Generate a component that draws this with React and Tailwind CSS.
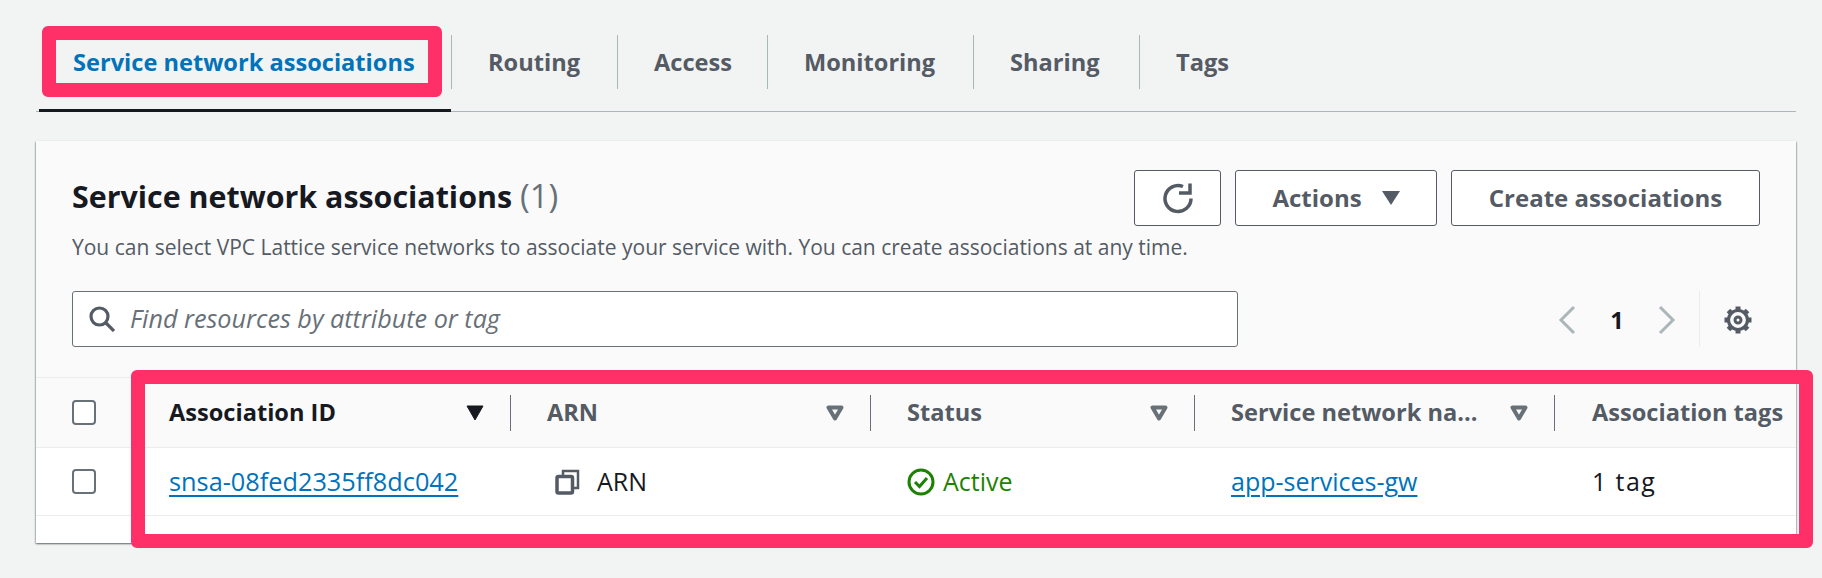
import React from 'react';

const tabs = [
  { label: 'Service network associations', width: 'w-[412px]', active: true },
  { label: 'Routing', width: 'w-[166px]' },
  { label: 'Access', width: 'w-[150px]' },
  { label: 'Monitoring', width: 'w-[206px]' },
  { label: 'Sharing', width: 'w-[166px]' },
  { label: 'Tags', width: 'w-[120px]' },
];

const gearTeeth = [0, 45, 90, 135, 180, 225, 270, 315];

function SortIcon({ active }) {
  if (active) {
    return (
      <svg width="18" height="16" viewBox="0 0 18 16" className="shrink-0">
        <path d="M1 1h16L9 15z" fill="#16191f" stroke="#16191f" strokeLinejoin="round" />
      </svg>
    );
  }
  return (
    <svg width="18" height="16" viewBox="0 0 18 16" className="shrink-0">
      <path d="M2.500 2.500h13L9 13.500z" fill="none" stroke="#687078" strokeWidth="4" strokeLinejoin="round" />
    </svg>
  );
}

function HeaderCell({ label, width, active, last }) {
  return (
    <div className={`${width} h-[36px] flex items-center justify-between ${last ? '' : 'border-r border-[#687078] pr-[26px]'} shrink-0`}>
      <span className={`text-[23.6px] font-bold whitespace-nowrap ${active ? 'text-[#16191f]' : 'text-[#545b64]'}`}>{label}</span>
      {!last && <SortIcon active={active} />}
    </div>
  );
}

function Checkbox() {
  return <div className="w-[24px] h-[25px] rounded-[4px] border-2 border-[#687078] bg-white shrink-0" />;
}

function Button({ className, children }) {
  return (
    <button className={`h-[56px] shrink-0 rounded-[3px] border border-[#545b64] bg-white flex items-center justify-center text-[#545b64] text-[24px] font-bold ${className}`}>
      {children}
    </button>
  );
}

export default function App() {
  return (
    <div className="relative w-[1822px] h-[578px] overflow-hidden bg-[#f2f3f3] pl-[36px] pr-[26px] pt-[35px] font-['Open_Sans',sans-serif]">
      {/* tabs */}
      <div className="h-[77px] border-b border-[#aab7b8] flex pl-[3px]">
        {tabs.map((tab, i) => (
          <div key={tab.label} className={`${tab.width} relative h-[77px] ${tab.active ? 'border-b-[3px] border-[#16191f]' : ''}`}>
            <div className={`h-[54px] pt-[2px] flex items-center ${i === 0 ? 'pl-[34px]' : 'pl-[36px] border-l border-[#aab7b8]'}`}>
              <span className={`text-[23.6px] font-bold whitespace-nowrap ${tab.active ? 'text-[#0073bb]' : 'text-[#545b64]'}`}>{tab.label}</span>
            </div>
          </div>
        ))}
      </div>

      {/* card */}
      <div className="mt-[29px] h-[402px] bg-[#fafafa] shadow-[0_1px_2px_rgba(0,28,36,0.4),1px_1px_1px_rgba(0,28,36,0.15),-1px_1px_1px_rgba(0,28,36,0.15)]">
        <div className="px-[36px] pt-[29px]">
          <div className="flex items-start">
            <div className="flex-1 min-w-0 pt-[7px]">
              <h2 className="h-[40px] text-[30.4px] leading-[40px] font-bold text-[#16191f]">
                Service network associations <span className="text-[33px] leading-none font-normal text-[#687078]">(1)</span>
              </h2>
              <p className="mt-[17px] text-[21px] leading-[26px] text-[#545b64] whitespace-nowrap">
                You can select VPC Lattice service networks to associate your service with. You can create associations at any time.
              </p>
            </div>
            <div className="flex gap-[14px] shrink-0">
              <Button className="w-[87px]">
                <svg width="32" height="32" viewBox="0 0 32 32" fill="none" stroke="#545b64" strokeWidth="3.5">
                  <path d="M21 4.500A13 13 0 1 0 29 16.500" />
                  <path d="M28 1.500V11H17" />
                </svg>
              </Button>
              <Button className="w-[202px] gap-[20px]">
                Actions
                <svg width="18" height="14" viewBox="0 0 18 14"><path d="M0 0h18L9 14z" fill="#545b64" /></svg>
              </Button>
              <Button className="w-[309px]">Create associations</Button>
            </div>
          </div>

          <div className="mt-[31px] flex items-center">
            <div className="w-[1166px] h-[56px] rounded-[3px] border border-[#687078] bg-white flex items-center pl-[16px] gap-[15px]">
              <svg width="26" height="26" viewBox="0 0 26 26" fill="none" stroke="#545b64" strokeWidth="3.2">
                <circle cx="10.500" cy="10.500" r="8.500" />
                <path d="M16.500 16.500 25 25" />
              </svg>
              <span className="text-[25.2px] italic text-[#687078]">Find resources by attribute or tag</span>
            </div>
            <div className="flex items-center ml-[320px] h-[56px]">
              <svg className="mt-[2px]" width="18" height="30" viewBox="0 0 18 30" fill="none" stroke="#aab7b8" strokeWidth="3">
                <path d="M16 2 3 15l13 13" />
              </svg>
              <span className="mt-[4px] w-[82px] text-center text-[23.6px] font-bold text-[#16191f]">1</span>
              <svg className="mt-[2px]" width="18" height="30" viewBox="0 0 18 30" fill="none" stroke="#aab7b8" strokeWidth="3">
                <path d="M2 2l13 13L2 28" />
              </svg>
              <div className="ml-[23px] h-[56px] border-l border-[#eaeded]" />
              <svg className="ml-[22px] mt-[2px]" width="32" height="30" viewBox="0 0 32 30" fill="none" stroke="#545b64">
                <circle cx="16" cy="15" r="9.500" strokeWidth="3.2" />
                <circle cx="16" cy="15" r="3" strokeWidth="3" />
                {gearTeeth.map((deg) => (
                  <path key={deg} d="M16 5V1.500" strokeWidth="5" transform={`rotate(${deg} 16 15)`} />
                ))}
              </svg>
            </div>
          </div>
        </div>

        {/* table */}
        <div className="mt-[30px] border-t border-[#eaeded]">
          <div className="h-[70px] flex items-center border-b border-[#eaeded] pl-[36px]">
            <Checkbox />
            <div className="w-[73px] shrink-0" />
            <HeaderCell label="Association ID" width="w-[342px]" active />
            <div className="w-[36px] shrink-0" />
            <HeaderCell label="ARN" width="w-[324px]" />
            <div className="w-[36px] shrink-0" />
            <HeaderCell label="Status" width="w-[288px]" />
            <div className="w-[36px] shrink-0" />
            <HeaderCell label="Service network na..." width="w-[324px]" />
            <div className="w-[37px] shrink-0" />
            <HeaderCell label="Association tags" width="w-[204px]" last />
          </div>
          <div className="h-[68px] flex items-center border-b border-[#eaeded] bg-white pl-[36px]">
            <Checkbox />
            <div className="w-[73px] shrink-0" />
            <a className="w-[378px] shrink-0 text-[25.3px] text-[#0073bb] underline underline-offset-[4px] decoration-2">snsa-08fed2335ff8dc042</a>
            <div className="w-[324px] shrink-0 flex items-center gap-[17px] pl-[8px] text-[25px] text-[#16191f]">
              <svg width="25" height="26" viewBox="0 0 25 26" fill="none" stroke="#545b64">
                <path d="M8 6V2h15v17h-5" strokeWidth="2.500" />
                <rect x="2" y="7.500" width="15.500" height="16.500" rx="1.500" strokeWidth="3.500" />
              </svg>
              ARN
            </div>
            <div className="w-[36px] shrink-0" />
            <div className="w-[288px] shrink-0 flex items-center gap-[8px] text-[25px] text-[#1d8102]">
              <svg width="28" height="28" viewBox="0 0 28 28" fill="none" stroke="#1d8102" strokeWidth="3">
                <circle cx="14" cy="14" r="12" />
                <path d="M8 14l4.500 4.500L20 10" />
              </svg>
              Active
            </div>
            <div className="w-[36px] shrink-0" />
            <a className="w-[361px] shrink-0 text-[25px] text-[#0073bb] underline underline-offset-[4px] decoration-2">app-services-gw</a>
            <span className="text-[25px] tracking-[1.4px] text-[#16191f]">1 tag</span>
          </div>
          <div className="h-[27px] bg-white" />
        </div>
      </div>

      {/* highlight boxes */}
      <div className="absolute left-[42px] top-[26px] w-[400px] h-[71px] rounded-[6px] border-[14px] border-[#ff3068]" />
      <div className="absolute left-[131px] top-[370px] w-[1682px] h-[178px] rounded-[6px] border-[14px] border-[#ff3068]" />
    </div>
  );
}
